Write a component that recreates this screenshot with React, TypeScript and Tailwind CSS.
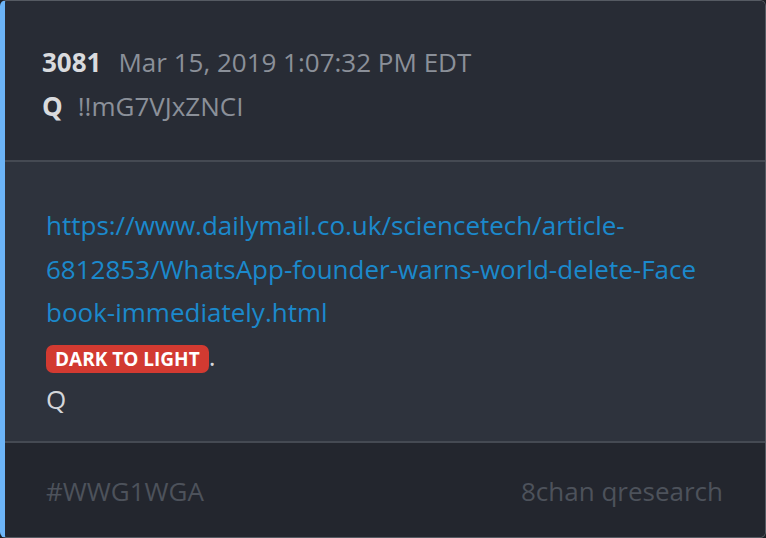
import React from "react";

const font = { fontFamily: '"Open Sans", "Noto Sans", sans-serif' };

export default function App() {
  return (
    <div className="w-[766px] h-[538px] bg-[#1d2026]" style={font}>
      <div className="h-[538px] flex flex-col overflow-hidden rounded-md border border-[#565b63] border-l-[5px] border-l-[#6cb4f7]">
        {/* header */}
        <div className="h-[159px] bg-[#282c35] pl-[37px] pt-[39px] text-[26px] leading-[44px]">
          <div className="flex items-baseline">
            <span className="font-bold text-[#d9dbde] mr-[17px]">3081</span>
            <span className="text-[#8b9099]">Mar 15, 2019 1:07:32 PM EDT</span>
          </div>
          <div className="flex items-baseline">
            <span className="font-bold text-[#d9dbde] mr-[15px]">Q</span>
            <span className="text-[#8b9099]">!!mG7VJxZNCI</span>
          </div>
        </div>
        <div className="h-[2px] bg-[#454a53]" />
        {/* body */}
        <div className="h-[279px] bg-[#2e333d] pl-[41px] pr-[40px] pt-[42px] text-[26px] leading-[43.5px]">
          <a className="text-[#1b89cc] block">
            <span className="block">https://www.dailymail.co.uk/sciencetech/article-</span>
            <span className="block">6812853/WhatsApp-founder-warns-world-delete-Face</span>
            <span className="block">book-immediately.html</span>
          </a>
          <div className="text-[#d4d6da]">
            <span className="inline-block bg-[#d23a31] text-white font-bold text-[19px] leading-[28px] px-[9px] rounded-[7px] align-middle">
              DARK TO LIGHT
            </span>
            <span>.</span>
          </div>
          <div className="text-[#d4d6da]">Q</div>
        </div>
        <div className="h-[2px] bg-[#454a53]" />
        {/* footer */}
        <div className="flex-1 bg-[#23262e] pl-[41px] pr-[42px] pt-[3px] flex items-center justify-between text-[26px] text-[#4d525b]">
          <span>#WWG1WGA</span>
          <span>8chan qresearch</span>
        </div>
      </div>
    </div>
  );
}
